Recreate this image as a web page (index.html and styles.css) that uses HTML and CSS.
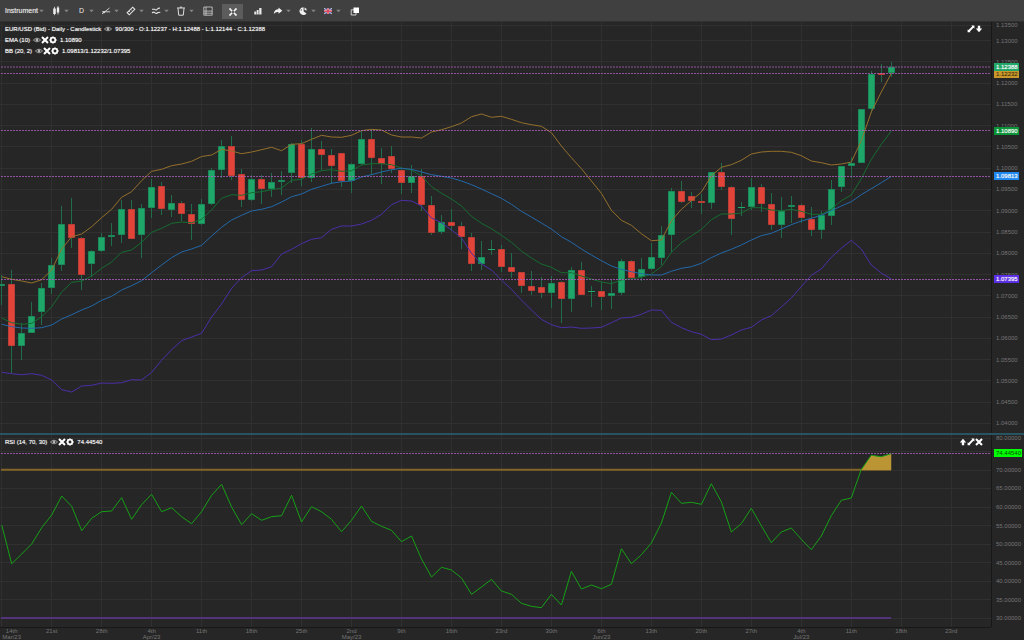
FILE: index.html
```html
<!DOCTYPE html>
<html lang="en">
<head>
<meta charset="utf-8">
<title>EUR/USD chart</title>
<link rel="stylesheet" href="styles.css">
</head>
<body>
<svg class="defs" aria-hidden="true">
  <symbol id="eye" viewBox="0 0 8 8"><path d="M.4 4Q4 .4 7.600 4Q4 7.600 .4 4Z" fill="none" stroke="#b5b5b5" stroke-width=".8"/><circle cx="4" cy="4" r="1.400" fill="#b5b5b5"/></symbol>
  <symbol id="cross" viewBox="0 0 8 8"><path d="M1 1L7 7M7 1L1 7" stroke="#fff" stroke-width="2.100"/></symbol>
  <symbol id="gear" viewBox="0 0 8 8"><circle cx="4" cy="4" r="2.300" fill="none" stroke="#fff" stroke-width="1.700"/><path d="M4 .4V1.600M4 6.400V7.600M.4 4H1.600M6.400 4H7.600M1.500 1.500L2.300 2.300M5.700 5.700L6.500 6.500M6.500 1.500L5.700 2.300M2.300 5.700L1.500 6.500" stroke="#fff" stroke-width="1.400"/></symbol>
  <symbol id="arrow-down" viewBox="0 0 8 8"><path d="M2.800 .8H5.200V3.500H7.200L4 7.200L.8 3.500H2.800Z" fill="#fff"/></symbol>
  <symbol id="arrow-up" viewBox="0 0 8 8"><path d="M2.800 7.200H5.200V4.500H7.200L4 .8L.8 4.500H2.800Z" fill="#fff"/></symbol>
  <symbol id="expand" viewBox="0 0 8 8"><path d="M7.400 .6V3.600L6.500 2.800L2.900 6.400L3.500 7.300H.6V4.400L1.500 5.100L5.100 1.500L4.400 .6Z" fill="#fff"/></symbol>
  <symbol id="caret" viewBox="0 0 5 4"><path d="M.3 .7H4.700L2.500 3.300Z" fill="#858585"/></symbol>
</svg>
<div class="app">
  <header class="toolbar">
    <button class="tool tool-text">Instrument<svg class="caret"><use href="#caret"/></svg></button>
    <button class="tool" aria-label="Chart type"><svg class="icon" viewBox="0 0 10 10"><path d="M3.500 .8V9.200M7 0V8.500" stroke="#e4e4e4" stroke-width=".8"/><path d="M2.200 2.500H4.800V8H2.200ZM5.800 1.500H8.200V6.500H5.800Z" fill="#ececec"/></svg><svg class="caret"><use href="#caret"/></svg></button>
    <button class="tool tool-period">D<svg class="caret"><use href="#caret"/></svg></button>
    <button class="tool" aria-label="Lines"><svg class="icon" viewBox="0 0 10 10"><path d="M1 8L8.500 2M1 5.800H9.200" stroke="#dcdcdc" fill="none" stroke-width=".9"/><circle cx="3" cy="6.300" r="1" fill="#ddd"/></svg><svg class="caret"><use href="#caret"/></svg></button>
    <button class="tool" aria-label="Ruler"><svg class="icon" viewBox="0 0 10 10"><path d="M1.200 6.700L6.700 1.200L8.800 3.300L3.300 8.800Z" fill="none" stroke="#e4e4e4" stroke-width="1.100"/><path d="M3 5L4.200 6.200M4.700 3.300L5.900 4.500" stroke="#e4e4e4" stroke-width=".8"/></svg><svg class="caret"><use href="#caret"/></svg></button>
    <button class="tool" aria-label="Indicators"><svg class="icon" viewBox="0 0 10 10"><path d="M1 3.200H3.500Q5 5 6.500 3Q7.500 1.800 9 2.200M1 7Q2.500 5.500 4 6.800T7 6.500L9.300 6.200" fill="none" stroke="#e2e2e2" stroke-width="1.100"/></svg><svg class="caret"><use href="#caret"/></svg></button>
    <button class="tool" aria-label="Remove"><svg class="icon" viewBox="0 0 10 10"><path d="M1 2H9M3.800 1.200H6.200M2 2.200L2.700 9.200H7.300L8 2.200" fill="none" stroke="#ddd" stroke-width="1"/></svg><svg class="caret"><use href="#caret"/></svg></button>
    <button class="tool tool-single" aria-label="Data table"><svg class="icon" viewBox="0 0 10 10"><path d="M.8 1H9.200V9.200H.8ZM3 1V9.200M.8 5.100H9.200M.8 7.200H9.200" fill="none" stroke="#cfcfcf" stroke-width=".8"/></svg></button>
    <button class="tool tool-active" aria-label="Crosshair" aria-pressed="true"><svg class="icon" viewBox="0 0 10 10"><path d="M2.200 2.200L4.100 4.100M7.800 2.200L5.900 4.100M2.200 7.800L4.100 5.900M7.800 7.800L5.900 5.900" stroke="#fff" stroke-width="1.500"/><path d="M1.300 3.300V1.300H3.300ZM6.700 1.300H8.700V3.300ZM1.300 6.700V8.700H3.300ZM6.700 8.700H8.700V6.700Z" fill="#fff"/></svg></button>
    <button class="tool tool-bars" aria-label="Volume"><svg class="icon" viewBox="0 0 10 10"><path d="M1.300 5.500H3.200V8.500H1.300ZM3.700 4H5.600V8.500H3.700ZM6.200 2H8.500V8.500H6.200Z" fill="#e8e8e8"/></svg></button>
    <button class="tool" aria-label="Share"><svg class="icon" viewBox="0 0 10 10"><path d="M5.500 1.500L9.300 4.800L5.500 7.700V6Q2.500 5.500 .8 8Q1 3.500 5.500 3.300Z" fill="#f2f2f2"/></svg><svg class="caret"><use href="#caret"/></svg></button>
    <button class="tool" aria-label="Theme"><svg class="icon" viewBox="0 0 10 10"><path d="M5.500 1.200A3.900 3.900 0 1 0 8.500 7.500L5.700 5.500Z" fill="#f2f2f2"/><path d="M6.500 1.500Q9 2.200 8.800 4.500L6.500 4Z" fill="#ddd"/><circle cx="3.300" cy="4" r=".7" fill="#555"/></svg><svg class="caret"><use href="#caret"/></svg></button>
    <button class="tool" aria-label="Language"><svg class="icon" viewBox="0 0 10 10"><path d="M1 2.200H9V8H1Z" fill="#4a548f"/><path d="M1 2.200L9 8M9 2.200L1 8" stroke="#ddd" stroke-width=".9"/><path d="M5 2.200V8M1 5.100H9" stroke="#eee" stroke-width="2"/><path d="M5 2.200V8M1 5.100H9" stroke="#d8243c" stroke-width="1.200"/></svg><svg class="caret"><use href="#caret"/></svg></button>
    <button class="tool tool-single" aria-label="New window"><svg class="icon" viewBox="0 0 10 10"><path d="M1.200 3.800H6V9H1.200Z" fill="none" stroke="#ddd" stroke-width=".9"/><path d="M3.500 1.500H9V7H3.500Z" fill="#fff"/></svg></button>
  </header>

  <main class="chart">
    <section class="pane" aria-label="Price">
      <svg class="plot" id="price-plot" viewBox="0 22 991 411" preserveAspectRatio="none"></svg>
      <div class="legend">
        <div class="legend-row"><span>EUR/USD (Bid) - Daily - Candlestick</span><svg class="mini"><use href="#eye"/></svg><span class="value">90/300 - O:1.12237 - H:1.12488 - L:1.12144 - C:1.12388</span></div>
        <div class="legend-row"><span>EMA (10)</span><span class="minis"><svg class="mini"><use href="#eye"/></svg><svg class="mini"><use href="#cross"/></svg><svg class="mini"><use href="#gear"/></svg></span><span class="value">1.10890</span></div>
        <div class="legend-row"><span>BB (20, 2)</span><span class="minis"><svg class="mini"><use href="#eye"/></svg><svg class="mini"><use href="#cross"/></svg><svg class="mini"><use href="#gear"/></svg></span><span class="value">1.09813/1.12232/1.07395</span></div>
      </div>
      <div class="pane-actions">
        <button aria-label="Expand"><svg class="mini"><use href="#expand"/></svg></button>
        <button aria-label="Move down"><svg class="mini"><use href="#arrow-down"/></svg></button>
      </div>
    </section>
    <div class="scale" id="price-scale"></div>
    <div class="divider"></div>
    <section class="pane" aria-label="RSI">
      <svg class="plot" id="rsi-plot" viewBox="0 435 991 192" preserveAspectRatio="none"></svg>
      <div class="legend">
        <div class="legend-row"><span>RSI (14, 70, 30)</span><span class="minis"><svg class="mini"><use href="#eye"/></svg><svg class="mini"><use href="#cross"/></svg><svg class="mini"><use href="#gear"/></svg></span><span class="value">74.44540</span></div>
      </div>
      <div class="pane-actions">
        <button aria-label="Move up"><svg class="mini"><use href="#arrow-up"/></svg></button>
        <button aria-label="Expand"><svg class="mini"><use href="#expand"/></svg></button>
        <button aria-label="Close"><svg class="mini"><use href="#cross"/></svg></button>
      </div>
    </section>
    <div class="scale" id="rsi-scale"></div>
    <div class="times" id="times"></div>
    <div class="corner"></div>
  </main>
</div>
<script src="chart.js"></script>
</body>
</html>
```

FILE: styles.css
```css
* { box-sizing: border-box; }

body {
  margin: 0;
  background: #262626;
  color: #fff;
  font: 6px/10px "Liberation Sans", Arial, sans-serif;
}

button {
  border: 0;
  padding: 0;
  background: none;
  color: inherit;
  font: inherit;
}

.defs { position: absolute; width: 0; height: 0; }

.app {
  display: flex;
  flex-direction: column;
  height: 100vh;
  overflow: hidden;
}

/* Toolbar */
.toolbar {
  display: flex;
  flex: none;
  gap: 7px;
  height: 22px;
  padding-left: 5px;
  background: #404040;
  border-bottom: 1px solid #303030;
}
.tool {
  display: flex;
  align-items: center;
  justify-content: space-between;
  width: 18px;
  color: #e8e8e8;
}
.tool-text { width: 39px; font-size: 7px; text-shadow: 0 0 1px #aaa; }
.tool-period { padding-left: 3px; font-size: 7px; }
.tool-single { width: 14px; justify-content: center; }
.tool-bars { width: 16px; justify-content: center; }
.tool-active {
  width: 21px;
  height: 15px;
  margin-top: 4px;
  justify-content: center;
  background: #5c5c5c;
}
.icon { width: 10px; height: 10px; }
.caret { width: 5px; height: 4px; }

/* Chart grid */
.chart {
  display: grid;
  flex: 1;
  min-height: 0;
  grid-template-columns: minmax(0, 1fr) 33px;
  grid-template-rows: minmax(0, 411fr) 2px minmax(0, 192fr) 13px;
}
.pane { position: relative; min-height: 0; }
.plot { display: block; width: 100%; height: 100%; }
.plot * { vector-effect: non-scaling-stroke; }
.divider { grid-column: 1 / -1; background: #285360; }

.legend {
  position: absolute;
  left: 5px;
  top: 2px;
  text-shadow: 0 0 1px #bbb;
}
.legend-row {
  display: flex;
  align-items: center;
  gap: 3px;
  height: 10px;
  margin-bottom: 1px;
  white-space: nowrap;
}
.minis { display: flex; }
.mini { display: block; width: 8px; height: 8px; }
.pane-actions {
  position: absolute;
  top: 3px;
  right: 8px;
  display: flex;
}

/* Scales */
.scale { position: relative; border-left: 1px solid #181818; }
.tick, .tag {
  position: absolute;
  left: 4px;
  height: 8px;
  margin-top: -4px;
  line-height: 8px;
  color: #757575;
}
.tag {
  left: 2px;
  padding: 0 1px 0 2px;
  color: #fff;
  text-shadow: 0 0 1px #ddd;
}
.tag-price { background: #1fa768; z-index: 2; }
.tag-upper { background: #c8962a; color: #2c2208; text-shadow: none; }
.tag-ema { background: #089436; }
.tag-mid { background: #1e88f0; }
.tag-lower { background: #5a2ee6; }
.tag-rsi { background: #00ff00; color: #0a4a0a; text-shadow: none; }

.times { position: relative; border-top: 1px solid #181818; }
.time {
  position: absolute;
  top: 0;
  transform: translateX(-50%);
  line-height: 6px;
  text-align: center;
  color: #757575;
}
.time span { display: block; }

/* Plot */
.grid { stroke: #303030; stroke-width: 1; fill: none; shape-rendering: crispEdges; }
.wick { stroke: #1f6b4a; stroke-width: 1; }
.up { fill: #1fa76a; stroke: #1b8a5a; stroke-width: 1; }
.down { fill: #e2443a; stroke: #bd3e36; stroke-width: 1; }
.doji { stroke: #1fa76a; stroke-width: 1; }
.marker { stroke: #b563c6; stroke-width: 1; stroke-dasharray: 2 1; opacity: .75; }
.line { fill: none; stroke-width: 1; stroke-linejoin: round; }
.line-upper { stroke: #93702c; }
.line-ema { stroke: #166c30; }
.line-mid { stroke: #2468a8; }
.line-lower { stroke: #4b2fa8; }
.line-rsi { stroke: #16a016; }
.over { fill: #bb9433; }
.limit-high { stroke: #836426; stroke-width: 2; }
.limit-low { stroke: #53337c; stroke-width: 2; }
```

FILE: chart.js
```js
const STEP = 9.995;
const START = 1.7;
const xAt = i => START + i * STEP;

// High, low, body top, body bottom, direction
const candles = [
  [275,305,284,286,1],[270,373,284,346,0],[323,360,333,346,1],[302,333,316,333,1],[283,325,288,312,1],
  [258,294,265,288,1],[206,271,224,265,1],[198,248,224,238,0],[237,290,238,275,0],[250,277,251,264,1],
  [233,252,237,251,1],[223,246,235,237,1],[200,243,209,235,1],[200,239,209,239,0],[204,258,208,235,1],
  [179,218,187,208,1],[182,215,186,209,0],[195,217,203,210,1],[201,221,203,214,0],[204,240,214,224,0],
  [199,225,204,224,1],[168,205,170,204,1],[140,178,146,170,1],[136,180,146,176,0],[169,207,174,200,0],
  [175,201,179,200,1],[175,204,179,189,0],[173,197,182,189,1],[171,195,180,182,1],[143,183,144,173,1],
  [140,186,144,178,0],[128,182,149,178,1],[141,171,149,155,0],[149,184,155,166,0],[153,187,153,181,0],
  [163,193,164,181,1],[131,165,139,164,1],[129,175,139,158,0],[148,184,158,164,0],[146,173,156,169,0],
  [169,194,170,183,0],[165,193,176,183,1],[169,211,176,205,0],[196,235,205,233,0],[215,234,222,232,1],
  [209,231,222,226,0],[222,249,226,237,0],[233,271,237,264,0],[241,270,257,264,1],[240,255,249,250,1],
  [245,272,249,267,0],[253,278,267,272,0],[272,293,272,286,0],[271,295,286,291,0],[277,298,287,293,0],
  [276,308,283,293,1],[281,323,282,299,0],[267,312,270,299,1],[262,295,270,295,0],[286,307,291,292,1],
  [282,310,291,297,0],[280,309,293,296,1],[259,295,261,293,1],[260,278,261,278,0],[258,281,269,277,1],
  [243,270,257,269,1],[226,265,235,258,1],[188,252,191,235,1],[181,203,191,202,0],[192,208,196,201,0],
  [194,214,201,203,0],[172,209,172,203,1],[163,190,172,187,0],[186,235,187,219,0],[202,216,207,208,1],
  [178,210,187,207,1],[184,212,187,204,0],[193,230,204,225,0],[197,238,211,225,1],[196,223,205,207,1],
  [204,223,205,218,0],[207,236,219,230,0],[211,239,215,230,1],[180,225,189,216,1],[166,192,166,187,1],
  [157,178,163,166,1],[109,163,109,163,1],[71,113,74,109,1],[64,82,73,75,0],[62,77,67,73,1]
];

const upper = [276.7,279.3,281,283,279.7,270,249,236.7,234,226.7,217.7,209.3,197.3,191.7,180.7,171.3,169.3,165.7,164,161.3,156.5,155,149.3,151,153.7,152,149.7,147.3,150.7,144.3,143.7,139.3,135.3,137,137.3,135.3,130.7,129.3,130,135,137,137,138,132,129.7,126.7,123,116.7,114,117.3,116.3,119.3,122.7,124.7,126.3,132.7,146,157.7,168.7,181,193.3,210.3,220.3,225.3,233.7,240.7,240,220.7,209.3,200.7,192,176,167.3,164.7,160.3,154,152,151.3,151.3,152.3,155.7,161,162.7,165,164,162,140.7,112,92,73.3];
const ema = [318,322.7,324.3,323.3,316.7,306.7,292,282.3,281,276,268.3,262,252.3,250,242.3,232.3,228.3,223.3,222,222.7,219.3,210,198.3,194.7,195.3,192.7,191.7,189.7,188,180.3,179.3,174,170.7,169.7,171.3,170.7,165,163.7,163.7,164.7,168,170,176,186.7,193.3,199,206,216.3,223.3,228.7,235.3,242.3,251,258,264,267.3,272.7,272.7,276,279,282,283.7,280,278.7,277.3,274,266.7,252.3,242.7,236,229.3,219.7,214,214,213,207.7,207.7,210,210.7,209.3,211.3,214.3,214.3,209.3,200.7,195,178.7,159.3,144.3,131];
const mid = [324.3,326.7,328,328.3,327.7,325,319,314.7,310,306,300.3,296.3,290,285.7,280.7,272.7,265,257.7,252,249,245.3,236,227.3,220,215.3,211,209.3,206.7,202,196.7,194,189.3,186.3,183.3,181.7,181,177,174.7,172,169.7,168.3,169.3,172,174.7,176.3,178,181,184.7,189,193.7,198.3,204.3,211.3,217,223,229,236.7,242.3,249,255,260.7,266,269.3,271.7,273.7,275,275,271.3,268.3,266.7,263.3,257.7,253,249.3,245,240,235.7,233.3,229,224.7,221,218.3,215.3,210.7,206,201.7,194.7,188.7,182.7,176.3];
const lower = [372.3,373.7,374.7,373.7,375.3,380,389.7,392,386,385.3,383,383.3,382.7,379.7,380,372.3,360.3,349.7,340.7,337,333.3,317,304,288.3,277.7,270.7,270,266.7,254,249.3,243.7,239.3,237.7,229.3,226,226,224,220.3,214.3,204.7,200.3,201,206,218,222.7,230,238,253.3,264,270,280,289.3,300,310,319.3,324.7,327.7,327,328.3,328,327.3,322.7,318,317.3,314.3,310,310.3,322.3,327.7,331.7,334.3,339.7,339,335,330,327.3,320,315.7,307,298,286.7,275.3,269,257.3,248.3,240.3,249,265,273,279];
const rsi = [525,563.7,554,544,527.7,515,496,506.3,530.7,518.3,511.7,511,497.7,519.3,504.7,494.3,511.7,507.7,516.7,523.7,511.7,495.3,484.3,507,524.7,513.7,520.3,516.7,515.7,495.3,522,506.7,511.7,519.3,531.7,520.3,506,521.3,526.3,530.3,541.7,536,559,577,567.3,570,578,594.3,587,579.3,591,594.3,603.3,606.3,607.7,594.3,605,571.3,589,585,588.7,584.3,548.7,563.7,554.7,543,523,492.3,503.3,502.3,504.3,483.7,501.7,532,523.7,508.3,525.7,542.7,532,528,539.3,549.7,536,515.7,500.3,498,469.3,455.3,456.7,453.7];

const hline = (y, cls, end = 991, start = 0) => `<path class="${cls}" d="M${start} ${y}H${end}"/>`;
const points = ys => ys.map((y, i) => `${xAt(i).toFixed(1)},${y}`).join(' ');
const poly = (ys, cls) => `<polyline class="line ${cls}" points="${points(ys)}"/>`;

function verticals(top, bottom) {
  let out = '';
  for (let i = 0; i <= 95; i += 5) out += `<path class="grid" d="M${Math.floor(xAt(i)) + 0.5} ${top}V${bottom}"/>`;
  return out;
}

const priceY = p => 168.2 + (1.1 - p) * 4254;
const priceTicks = [];
for (let k = 0; k < 20; k++) {
  const p = 1.135 - k * 0.005;
  priceTicks.push([p.toFixed(5), k ? priceY(p) : 25]);
}
const rsiY = v => 470 + (70 - v) * 3.7;
const rsiTicks = [['80.00000', 438], ['75.00000', 451]];
for (let v = 70; v >= 30; v -= 5) rsiTicks.push([v.toFixed(5), rsiY(v)]);

let price = verticals(22, 433);
priceTicks.forEach(([, y]) => { price += hline(Math.floor(y) + 0.5, 'grid'); });
candles.forEach(([high, low, top, bottom, up], i) => {
  const x = Math.floor(xAt(i)) + 0.5;
  price += `<path class="wick" d="M${x} ${high}V${low}"/>`;
  if (bottom - top < 2) {
    price += `<path class="doji" d="M${x - 3.5} ${top + 0.5}H${x + 3.5}"/>`;
  } else {
    price += `<rect class="${up ? 'up' : 'down'}" x="${x - 3}" y="${top + 0.5}" width="6" height="${bottom - top - 1}"/>`;
  }
});
price += poly(upper, 'line-upper') + poly(ema, 'line-ema') + poly(mid, 'line-mid') + poly(lower, 'line-lower');
[67, 73.5, 130.5, 176.5, 279.5].forEach(y => { price += hline(y, 'marker', 991, 1); });
document.getElementById('price-plot').innerHTML = price;

let strength = verticals(435, 627);
rsiTicks.forEach(([, y]) => { strength += hline(Math.floor(y) + 0.5, 'grid'); });
strength += hline(469.7, 'limit-high', 891, 1) + hline(618, 'limit-low', 891, 1);
strength += `<polygon class="over" points="${xAt(86)},470 ${xAt(87)},455.3 ${xAt(88)},456.7 ${xAt(89)},453.7 ${xAt(89)},470"/>`;
strength += poly(rsi, 'line-rsi') + hline(453.5, 'marker', 991, 1);
document.getElementById('rsi-plot').innerHTML = strength;

function fillScale(id, ticks, tags, top, height) {
  const at = y => ((y - top) / height * 100).toFixed(2);
  document.getElementById(id).innerHTML =
    ticks.map(([t, y]) => `<span class="tick" style="top:${at(y)}%">${t}</span>`).join('') +
    tags.map(([t, y, c]) => `<span class="tag tag-${c}" style="top:${at(y)}%">${t}</span>`).join('');
}
fillScale('price-scale', priceTicks, [
  ['1.12232', 74, 'upper'], ['1.12388', 67, 'price'], ['1.10890', 131, 'ema'],
  ['1.09813', 176, 'mid'], ['1.07395', 279, 'lower']
], 22, 411);
fillScale('rsi-scale', rsiTicks.filter(([t]) => t !== '75.00000'), [['74.44540', 453, 'rsi']], 435, 192);

const days = ['14th','21st','28th','4th','11th','18th','25th','2nd','9th','16th','23rd','30th','6th','13th','20th','27th','4th','11th','18th','23rd'];
const months = { 0: 'Mar/23', 3: 'Apr/23', 7: 'May/23', 12: 'Jun/23', 16: 'Jul/23' };
document.getElementById('times').innerHTML = days.map((d, k) => {
  const x = k ? xAt(k * 5) : xAt(1);
  return `<div class="time" style="left:${(x / 991 * 100).toFixed(2)}%"><span>${d}</span>${months[k] ? `<span>${months[k]}</span>` : ''}</div>`;
}).join('');
```
